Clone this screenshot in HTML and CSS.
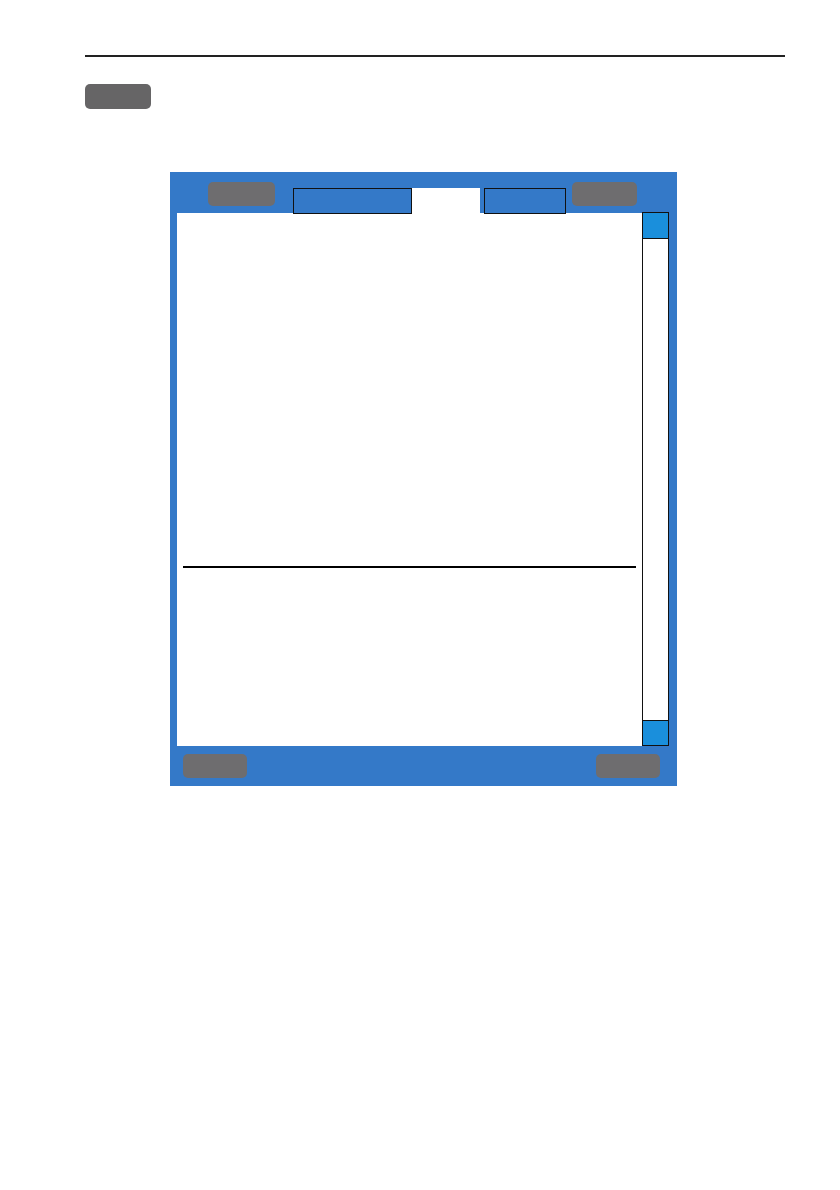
FILE: index.html
```html
<!DOCTYPE html>
<html>
<head>
<meta charset="utf-8">
<link rel="stylesheet" href="styles.css">
</head>
<body>
<div class="page">
  <div class="rule"></div>
  <div class="key"></div>
  <div class="panel">
    <div class="topbar">
      <div class="softkey softkey-tl"></div>
      <div class="tab tab-a"></div>
      <div class="tab tab-active"></div>
      <div class="tab tab-c"></div>
      <div class="softkey softkey-tr"></div>
    </div>
    <div class="body">
      <div class="content">
        <div class="divider"></div>
      </div>
      <div class="scrollbar">
        <div class="arrow"></div>
        <div class="track"></div>
        <div class="arrow"></div>
      </div>
    </div>
    <div class="bottombar">
      <div class="softkey"></div>
      <div class="softkey"></div>
    </div>
  </div>
</div>
</body>
</html>
```
FILE: styles.css
```css
html, body {
  margin: 0;
  padding: 0;
  background: #ffffff;
  font-family: "Liberation Sans", Arial, sans-serif;
}
.page {
  width: 840px;
  height: 1190px;
  padding-top: 55px;
  box-sizing: border-box;
}
.rule {
  margin-left: 85px;
  width: 700px;
  height: 2px;
  background: #222222;
}
.key {
  margin-left: 85px;
  margin-top: 27px;
  width: 66px;
  height: 25px;
  border-radius: 5px;
  background: #666566;
}
.panel {
  margin-left: 170px;
  margin-top: 63px;
  width: 507px;
  height: 614px;
  background: #3479c8;
  display: flex;
  flex-direction: column;
}
.topbar {
  height: 41px;
  display: flex;
  align-items: flex-end;
  padding-left: 38px;
  box-sizing: border-box;
}
.softkey {
  width: 66px;
  height: 24px;
  border-radius: 5px;
  background: #6e6d6f;
}
.softkey-tl {
  width: 67px;
  align-self: flex-start;
  margin-top: 10px;
  margin-right: 18px;
}
.softkey-tr {
  width: 65px;
  align-self: flex-start;
  margin-top: 10px;
  margin-left: 6px;
}
.tab {
  height: 26px;
  margin-bottom: -1px;
  box-sizing: border-box;
  position: relative;
}
.tab-a {
  width: 119px;
  border: 1px solid #111111;
  background: #3479c8;
}
.tab-active {
  width: 68px;
  background: #ffffff;
  margin-right: 4px;
}
.tab-c {
  width: 82px;
  border: 1px solid #111111;
  background: #3479c8;
}
.body {
  display: flex;
  padding-left: 7px;
  padding-right: 8px;
  height: 533px;
}
.content {
  width: 465px;
  background: #ffffff;
  padding-top: 353px;
  padding-left: 6px;
  padding-right: 6px;
  box-sizing: border-box;
}
.divider {
  height: 2px;
  background: #000000;
}
.scrollbar {
  width: 27px;
  margin-top: -1px;
  border: 1px solid #111111;
  box-sizing: border-box;
  background: #ffffff;
  display: flex;
  flex-direction: column;
}
.arrow {
  height: 25px;
  background: #1a8fdc;
}
.arrow:first-child {
  border-bottom: 1px solid #111111;
}
.arrow:last-child {
  border-top: 1px solid #111111;
  height: 24px;
}
.track {
  flex: 1;
}
.bottombar {
  display: flex;
  justify-content: space-between;
  padding: 8px 17px 0 13px;
}
.bottombar .softkey {
  width: 64px;
}
```
